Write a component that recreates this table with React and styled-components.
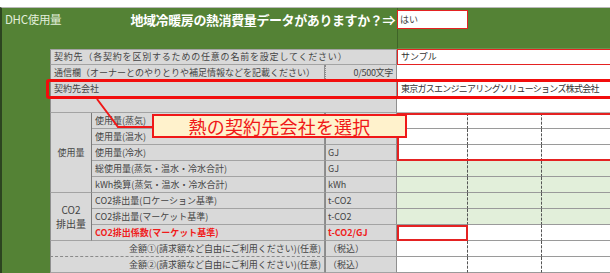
import styled, { createGlobalStyle, css } from 'styled-components'

const GlobalStyle = createGlobalStyle`
  html, body {
    margin: 0;
    padding: 0;
    background: #fff;
  }
  body {
    font-family: "Noto Sans CJK JP", "Noto Sans", sans-serif;
  }
`;

const Frame = styled.div`
  position: relative;
  width: 610px;
  height: 273px;
  padding-top: 7px;
  box-sizing: border-box;
  overflow: hidden;
  background: #fff;
`;

// last column runs past the visible edge, as in the cropped sheet
const Sheet = styled.div`
  display: grid;
  grid-template-columns: 48px 42px 233px 72px 71px 74px 80px;
  grid-template-rows: 21px 20px repeat(14, 16px);
  width: 622px;
  height: 266px;
  box-sizing: border-box;
  background: #548235;
  border-top: 1px solid #b9b9b9;
  border-left: 2px solid #2c4420;
  font-size: 9px;
  color: #444;
`;

const Banner = styled.div`
  grid-column: 1 / 5;
  grid-row: 1;
  display: flex;
  align-items: center;
  justify-content: space-between;
  padding: 1px 2px 0 3px;
  white-space: nowrap;
`;

const SheetName = styled.span`
  font-size: 11.5px;
  color: #e2efda;
  letter-spacing: -0.3px;
`;

const Question = styled.span`
  font-size: 13px;
  font-weight: 700;
  color: #fff;
  letter-spacing: -0.4px;
`;

const AnswerBox = styled.div`
  grid-column: 5;
  grid-row: 1;
  margin-top: 2px;
  display: flex;
  align-items: center;
  padding-left: 2px;
  background: #fff;
  border: 1.5px solid #e42222;
  box-sizing: border-box;
`;

const BannerStrip = styled.div`
  grid-column: 5 / 8;
  grid-row: 1 / 3;
  border-left: 1px solid #3f6428;
  border-bottom: 1px solid #6a9450;
  pointer-events: none;
`;

const cellBase = css`
  display: flex;
  align-items: center;
  box-sizing: border-box;
  padding: 0 3px;
  white-space: nowrap;
  overflow: hidden;
  line-height: 16px;
`;

const LabelCell = styled.div`
  ${cellBase};
  grid-column: ${(p) => p.$col};
  grid-row: ${(p) => p.$row};
  justify-content: ${(p) => (p.$right ? 'flex-end' : 'flex-start')};
  background: #d9d9d9;
  border-left: ${(p) => (p.$edge ? '1px solid #8f8f8f' : 'none')};
  border-right: 1px solid #8f8f8f;
  border-bottom: ${(p) => (p.$dashed ? '1px dashed #8a8a8a' : '1px solid #a3a3a3')};
  border-top: ${(p) => (p.$top ? '1px solid #a3a3a3' : 'none')};
  letter-spacing: ${(p) => p.$spread || 0}px;
  color: ${(p) => (p.$alert ? '#f01c1c' : '#444')};
  font-weight: ${(p) => (p.$alert ? 700 : 400)};
`;

const GroupCell = styled.div`
  ${cellBase};
  grid-column: 2;
  grid-row: ${(p) => p.$row};
  flex-direction: column;
  justify-content: center;
  text-align: center;
  line-height: 14px;
  font-size: ${(p) => p.$size || 9}px;
  background: #d9d9d9;
  border-left: 1px solid #8f8f8f;
  border-right: 1px solid #7a7a7a;
  border-bottom: 1px solid #a3a3a3;
`;

const CountCell = styled.div`
  ${cellBase};
  grid-column: 4;
  grid-row: ${(p) => p.$row};
  justify-content: flex-end;
  background: #d9d9d9;
  border-left: 1px dotted #8a8a8a;
  border-right: 1px solid #8f8f8f;
  border-bottom: 1px solid #a3a3a3;
  letter-spacing: -0.3px;
`;

const UnitCell = styled.div`
  ${cellBase};
  grid-column: 4;
  grid-row: ${(p) => p.$row};
  padding-left: 2px;
  background: #d9d9d9;
  border-left: 1px solid #8a8a8a;
  border-right: 1px solid #8f8f8f;
  border-bottom: 1px solid #a3a3a3;
  color: ${(p) => (p.$alert ? '#f01c1c' : '#444')};
  font-weight: ${(p) => (p.$alert ? 700 : 400)};
`;

const ValueCell = styled.div`
  ${cellBase};
  grid-column: 5 / 8;
  grid-row: ${(p) => p.$row};
  background: #fff;
  border-bottom: 1px solid #b5b5b5;
  ${(p) => p.$marked && css`border: 1.5px solid #e42222;`}
  letter-spacing: ${(p) => p.$tight || 0}px;
  color: #333;
`;

const DataCell = styled.div`
  grid-column: ${(p) => p.$col};
  grid-row: ${(p) => p.$row};
  box-sizing: border-box;
  background: ${(p) => (p.$calc ? '#e2efda' : '#fff')};
  border-bottom: 1px solid #9a9a9a;
  border-right: 1px dashed #555;
  ${(p) => p.$marked && css`border: 2px solid #e42222;`}
`;

const UsageBox = styled.div`
  grid-column: 5 / 8;
  grid-row: 7 / 10;
  border: 2px solid #e42222;
  pointer-events: none;
  z-index: 1;
`;

const RowHighlight = styled.div`
  grid-column: 2 / 8;
  grid-row: 5;
  margin: -2px 0 -2px -4px;
  border: 3px solid #f20d0d;
  border-radius: 3px;
  pointer-events: none;
  z-index: 2;
`;

const Callout = styled.div`
  position: absolute;
  left: 152px;
  top: 114px;
  width: 255px;
  height: 24px;
  box-sizing: border-box;
  display: flex;
  align-items: center;
  justify-content: center;
  background: #fff2cc;
  border: 2px solid #f01818;
  color: #f01818;
  font-size: 18px;
  letter-spacing: 0.2px;
  z-index: 4;
`;

const Leader = styled.svg`
  position: absolute;
  left: 0;
  top: 0;
  z-index: 3;
  pointer-events: none;
`;

// units of the first two rows sit under the callout
const usageRows = [
  { item: '使用量(蒸気)', unit: '' },
  { item: '使用量(温水)', unit: '' },
  { item: '使用量(冷水)', unit: 'GJ' },
  { item: '総使用量(蒸気・温水・冷水合計)', unit: 'GJ', calc: true },
  { item: 'kWh換算(蒸気・温水・冷水合計)', unit: 'kWh', calc: true },
];

const co2Rows = [
  { item: 'CO2排出量(ロケーション基準)', unit: 't-CO2', calc: true },
  { item: 'CO2排出量(マーケット基準)', unit: 't-CO2', calc: true },
  { item: 'CO2排出係数(マーケット基準)', unit: 't-CO2/GJ', alert: true },
];

const costRows = ['金額①(請求額など自由にご利用ください)(任意)', '金額②(請求額など自由にご利用ください)(任意)'];

const DataCells = ({ row, calc, markFirst }) => (
  <>
    <DataCell $col={5} $row={row} $calc={calc} $marked={markFirst} />
    <DataCell $col={6} $row={row} $calc={calc} />
    <DataCell $col={7} $row={row} $calc={calc} />
  </>
);

const App = () => {
  return (
    <Frame>
      <GlobalStyle />
      <Sheet>
        <Banner>
          <SheetName>DHC使用量</SheetName>
          <Question>地域冷暖房の熱消費量データがありますか？⇒</Question>
        </Banner>
        <BannerStrip />
        <AnswerBox>はい</AnswerBox>

        <LabelCell $col="2 / 5" $row={3} $edge $top $spread={0.8}>
          契約先（各契約を区別するための任意の名前を設定してください）
        </LabelCell>
        <ValueCell $row={3} $marked>サンプル</ValueCell>

        <LabelCell $col="2 / 4" $row={4} $edge>
          通信欄（オーナーとのやりとりや補足情報などを記載ください）
        </LabelCell>
        <CountCell $row={4}>0/500文字</CountCell>
        <ValueCell $row={4} />

        <LabelCell $col="2 / 5" $row={5} $edge>契約先会社</LabelCell>
        <ValueCell $row={5} $marked $tight={-0.75}>
          東京ガスエンジニアリングソリューションズ株式会社
        </ValueCell>

        <LabelCell $col="2 / 5" $row={6} $edge />
        <ValueCell $row={6} />

        <GroupCell $row="7 / 12">使用量</GroupCell>
        {usageRows.map((r, i) => (
          <>
            <LabelCell key={r.item} $col={3} $row={7 + i}>{r.item}</LabelCell>
            <UnitCell $row={7 + i}>{r.unit}</UnitCell>
            <DataCells row={7 + i} calc={r.calc} />
          </>
        ))}

        <GroupCell $row="12 / 15" $size={10}>
          <span>CO2</span>
          <span>排出量</span>
        </GroupCell>
        {co2Rows.map((r, i) => (
          <>
            <LabelCell key={r.item} $col={3} $row={12 + i} $alert={r.alert}>{r.item}</LabelCell>
            <UnitCell $row={12 + i} $alert={r.alert}>{r.unit}</UnitCell>
            <DataCells row={12 + i} calc={r.calc} markFirst={r.alert} />
          </>
        ))}

        {costRows.map((label, i) => (
          <>
            <LabelCell key={label} $col="2 / 4" $row={15 + i} $edge $right $dashed={i === 0}>
              {label}
            </LabelCell>
            <UnitCell $row={15 + i}>（税込）</UnitCell>
            <DataCells row={15 + i} />
          </>
        ))}

        <UsageBox />
        <RowHighlight />
      </Sheet>

      <Leader width="610" height="273">
        <polyline points="97,99 118,127 153,127" fill="none" stroke="#f01818" strokeWidth="2" />
      </Leader>
      <Callout>熱の契約先会社を選択</Callout>
    </Frame>
  );
};

export default App;
